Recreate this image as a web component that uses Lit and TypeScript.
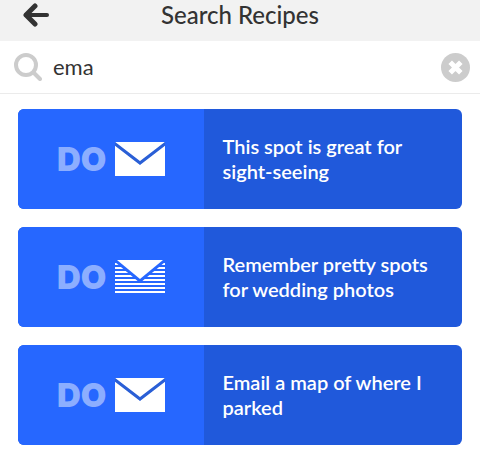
import { LitElement, html, css, svg } from "lit";
import { customElement, property, state } from "lit/decorators.js";

interface Recipe {
  title: string;
  icon: "mail" | "digest";
}

@customElement("mail-icon")
export class MailIcon extends LitElement {
  static styles = css`
    :host {
      display: block;
      width: 50px;
      height: 34px;
    }
    .icon {
      display: block;
      width: 100%;
      height: 100%;
    }
    .paper {
      fill: #ffffff;
    }
    .fold {
      fill: none;
      stroke: #2a5fd6;
      stroke-width: 3;
    }
    .gap {
      fill: #2667ff;
    }
  `;

  @property() kind: Recipe["icon"] = "mail";

  render() {
    const solid = svg`
      <rect class="paper" width="50" height="34" />
      <path class="fold" d="M-1 1 L25 21 L51 1" />`;
    const striped = svg`
      ${[4, 8, 12, 16, 20, 24, 28, 32].map(
        (y) => svg`<rect class="paper" y=${y - 1} width="50" height="2" />`
      )}
      <path class="gap" d="M0 0 V2 L25 23 L50 2 V0 Z" />
      <path class="paper" d="M2 0 H48 L25 19 Z" />`;
    return html`<svg class="icon" viewBox="0 0 50 34" aria-hidden="true">
      ${this.kind === "digest" ? striped : solid}
    </svg>`;
  }
}

@customElement("recipe-card")
export class RecipeCard extends LitElement {
  static styles = css`
    :host {
      display: block;
    }
    .card {
      display: grid;
      grid-template-columns: 42fr 58fr;
      width: 100%;
      min-height: 100px;
      padding: 0;
      border: 0;
      border-radius: 6px;
      overflow: hidden;
      background: #2059db;
      color: #ffffff;
      font: inherit;
      text-align: left;
      cursor: pointer;
    }
    .channel {
      display: flex;
      align-items: center;
      justify-content: center;
      gap: 9px;
      background: #2667ff;
    }
    .do {
      font-family: Inter, sans-serif;
      font-size: 33px;
      line-height: 32px;
      font-weight: 900;
      color: #8caeff;
    }
    .title {
      align-self: center;
      padding: 0 18px;
      font-size: 20px;
      line-height: 25px;
      font-weight: 600;
    }
  `;

  @property({ attribute: false }) recipe!: Recipe;

  render() {
    return html`<button class="card" type="button">
      <span class="channel">
        <span class="do">DO</span>
        <mail-icon .kind=${this.recipe.icon}></mail-icon>
      </span>
      <span class="title">${this.recipe.title}</span>
    </button>`;
  }
}

@customElement("app-root")
export class AppRoot extends LitElement {
  static styles = css`
    :host {
      display: block;
      min-height: 100vh;
      background: #ffffff;
      color: #333333;
      font-family: Lato, sans-serif;
    }
    .bar {
      display: grid;
      grid-template-columns: 26px 1fr 26px;
      align-items: center;
      height: 41px;
      padding: 0 23px;
      background: #f2f2f2;
    }
    .heading {
      margin: 0;
      padding-bottom: 12px;
      font-size: 24px;
      line-height: 30px;
      font-weight: 500;
      text-align: center;
    }
    .plain {
      display: block;
      padding: 0;
      border: 0;
      background: none;
      cursor: pointer;
    }
    .back {
      padding-bottom: 12px;
    }
    .glyph {
      display: block;
    }
    .search {
      display: flex;
      align-items: center;
      gap: 11px;
      height: 52px;
      padding: 0 10px 0 14px;
      border-bottom: 1px solid #ebebeb;
    }
    .query {
      flex: 1;
      min-width: 0;
      padding: 0;
      border: 0;
      outline: 0;
      background: none;
      color: inherit;
      font: inherit;
      font-size: 22px;
      line-height: 28px;
    }
    .results {
      display: grid;
      gap: 18px;
      margin: 0;
      padding: 15px 18px 6px;
      list-style: none;
    }
  `;

  @state() private query = "ema";

  private recipes: Recipe[] = [
    { title: "This spot is great for sight-seeing", icon: "mail" },
    { title: "Remember pretty spots for wedding photos", icon: "digest" },
    { title: "Email a map of where I parked", icon: "mail" },
  ];

  render() {
    return html`
      <header class="bar">
        <button class="plain back" type="button" aria-label="Back">
          <svg class="glyph" width="26" height="24" viewBox="0 0 26 24" fill="none"
            stroke="#333333" stroke-width="4" stroke-linecap="round" stroke-linejoin="round">
            <path d="M12 3 L3 12 L12 21" stroke-width="5" />
            <path d="M3 12 H24" />
          </svg>
        </button>
        <h1 class="heading">Search Recipes</h1>
      </header>
      <search class="search">
        <svg class="glyph" width="28" height="28" viewBox="0 0 28 28" fill="none"
          stroke="#cccccc" aria-hidden="true">
          <circle cx="12" cy="12" r="10" stroke-width="4" />
          <path d="M20 20 L26 26" stroke-width="4" stroke-linecap="round" />
        </svg>
        <input class="query" type="text" aria-label="Search recipes" .value=${this.query}
          @input=${(e: Event) => (this.query = (e.target as HTMLInputElement).value)} />
        <button class="plain" type="button" aria-label="Clear search"
          @click=${() => (this.query = "")}>
          <svg class="glyph" width="29" height="29" viewBox="0 0 29 29">
            <circle cx="14.5" cy="14.5" r="14.5" fill="#cccccc" />
            <path d="M9.2 9.2 L19.8 19.8 M19.8 9.2 L9.2 19.8" stroke="#ffffff" stroke-width="5" />
          </svg>
        </button>
      </search>
      <ul class="results">
        ${this.recipes.map(
          (recipe) => html`<li><recipe-card .recipe=${recipe}></recipe-card></li>`
        )}
      </ul>
    `;
  }
}
